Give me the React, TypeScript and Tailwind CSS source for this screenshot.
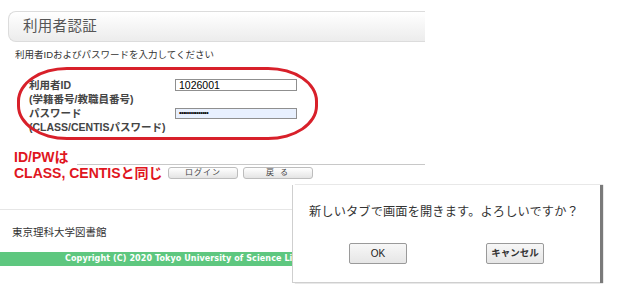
import React from "react";

const jp = "font-['Liberation_Sans','Noto_Sans_CJK_JP',sans-serif]";

export default function App() {
  return (
    <div className={`relative w-[626px] h-[299px] bg-white overflow-hidden ${jp}`}>
      {/* page */}
      <div className="w-[425px] pt-[11px]">
        <div className="ml-[8px] h-[31px] rounded-l-[8px] border border-[#dcdcdc] border-r-0 bg-gradient-to-b from-white to-[#ececec] flex items-center pl-[14px]">
          <span className="text-[14.5px] text-[#555] tracking-[0.3px]">利用者認証</span>
        </div>
        <div className="mt-[7px] pl-[15px] text-[9.5px] leading-[12px] text-[#333]">
          利用者IDおよびパスワードを入力してください
        </div>
        <div className="mt-[17px] ml-[29px] grid grid-cols-[146px_122px] text-[10.5px] leading-[14px] font-bold text-[#444]">
          <div>
            <div>利用者ID</div>
            <div>(学籍番号/教職員番号)</div>
          </div>
          <div className="pt-[1px]">
            <div className="h-[12px] border border-[#8f8f8f] bg-white pl-[3px] text-[10.5px] leading-[10px] font-normal text-black">1026001</div>
          </div>
          <div>
            <div>パスワード</div>
            <div>(CLASS/CENTISパスワード)</div>
          </div>
          <div className="pt-[2px]">
            <div className="h-[11px] border border-[#8f8f8f] bg-[#e8f0fe] pl-[3px] text-[7px] leading-[8px] font-normal text-black tracking-[-0.5px]">•••••••••••••••</div>
          </div>
        </div>
        <div className="mt-[30px] ml-[77px] border-t border-[#c8c8c8]" />
        <div className="mt-[2px] ml-[168px] flex gap-[5px]">
          <div className="w-[70px] h-[12px] rounded-[3px] border border-[#bdbdbd] bg-gradient-to-b from-white to-[#e4e4e4] flex items-center justify-center text-[8px] text-[#444] tracking-[1px]">ログイン</div>
          <div className="w-[70px] h-[12px] rounded-[3px] border border-[#bdbdbd] bg-gradient-to-b from-white to-[#e4e4e4] flex items-center justify-center text-[8px] text-[#444] tracking-[2px]">戻 る</div>
        </div>
        <div className="mt-[30px] border-t border-[#e6e6e6]" />
        <div className="mt-[15px] pl-[12px] text-[10.5px] leading-[14px] text-[#333]">東京理科大学図書館</div>
        <div className="mt-[13px] h-[14px] bg-[#5ec77f] flex items-center pl-[65px] overflow-hidden whitespace-nowrap">
          <span className="font-['DejaVu_Sans',sans-serif] text-[8px] font-semibold text-white tracking-[0.1px]">Copyright (C) 2020 Tokyo University of Science Library</span>
        </div>
      </div>

      {/* red annotation ellipse */}
      <div className="absolute left-[17px] top-[67px] w-[301px] h-[73px] border-[3px] border-[#d8202a] rounded-[50px/34px]" />
      {/* red annotation text */}
      <div className="absolute left-[14px] top-[149px] text-[14px] leading-[16px] font-bold text-[#e0161e]">
        <div>ID/PWは</div>
        <div>CLASS, CENTISと同じ</div>
      </div>

      {/* dialog */}
      <div className="absolute left-[292px] top-[185px] w-[308px] h-[98px] bg-white border-l border-b border-[#cfcfcf] shadow-[3px_0_1px_#7a7a7a]">
        <div className="pl-[16px] pt-[20px] text-[12.2px] leading-[14px] text-[#333] tracking-[0.15px]">
          新しいタブで画面を開きます。よろしいですか？
        </div>
        <div className="absolute left-[56px] top-[58px] w-[58px] h-[21px] rounded-[2px] border border-[#9a9a9a] bg-gradient-to-b from-[#f7f7f7] to-[#e6e6e6] flex items-center justify-center text-[10px] text-[#222]">OK</div>
        <div className="absolute left-[193px] top-[58px] w-[58px] h-[21px] rounded-[2px] border border-[#9a9a9a] bg-gradient-to-b from-[#f7f7f7] to-[#e6e6e6] flex items-center justify-center text-[9.5px] font-bold text-[#333]">キャンセル</div>
      </div>
    </div>
  );
}
